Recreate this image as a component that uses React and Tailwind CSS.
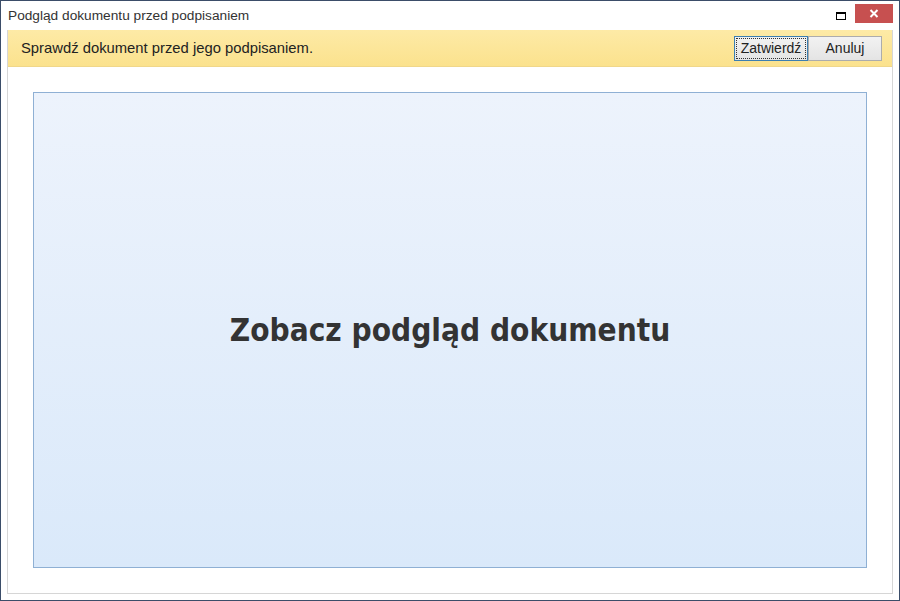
export default function App() {
  return (
    <div className="w-[900px] h-[601px] bg-white border border-[#3b4d69] flex flex-col font-['Segoe_UI','Liberation_Sans',sans-serif] text-[#1e1e1e]">
      {/* title bar */}
      <div className="h-[29px] flex items-center pl-[7px] shrink-0">
        <span className="text-[13.7px] text-[#333] mt-[2px]">Podgląd dokumentu przed podpisaniem</span>
        <div className="ml-auto flex items-center h-full">
          <div className="w-[10px] h-[8px] border border-black border-t-2 mr-[9px]" />
          <div className="w-[38px] h-[19px] bg-[#c75050] flex items-center justify-center mr-[6px] -mt-[4px]">
            <svg width="10" height="9" viewBox="0 0 10 9">
              <path d="M1.5 1 L8.5 8 M8.5 1 L1.5 8" stroke="white" strokeWidth="2" />
            </svg>
          </div>
        </div>
      </div>

      {/* client area */}
      <div className="flex-1 mx-[6px] mb-[6px] border-x border-b border-[#d6d6d6] flex flex-col">
        <div className="h-[37px] shrink-0 bg-gradient-to-b from-[#fdeaa6] to-[#fbe28d] border-b border-[#f0d78a] flex items-center pl-[13px] pr-[10px]">
          <span className="text-[14.8px] text-[#222]">Sprawdź dokument przed jego podpisaniem.</span>
          <div className="ml-auto flex">
            <button className="w-[74px] h-[25px] border border-[#3c7fb1] bg-gradient-to-b from-[#f2f2f2] to-[#e4e4e4] text-[14px] text-[#222] p-[1px]">
              <span className="flex h-full w-full items-center justify-center border border-dotted border-[#333]">Zatwierdź</span>
            </button>
            <button className="w-[74px] h-[25px] border border-[#acacac] bg-gradient-to-b from-[#f2f2f2] to-[#e4e4e4] text-[14px] text-[#222]">
              Anuluj
            </button>
          </div>
        </div>

        <div className="flex-1 px-[25px] pt-[25px] pb-[25px] flex">
          <div className="flex-1 border border-[#8fb0d4] bg-gradient-to-b from-[#edf3fc] to-[#dae9fa] flex items-center justify-center">
            <span className="text-[31.3px] font-bold text-[#333] font-['DejaVu_Sans_Condensed','DejaVu_Sans',sans-serif]">Zobacz podgląd dokumentu</span>
          </div>
        </div>
      </div>
    </div>
  );
}
